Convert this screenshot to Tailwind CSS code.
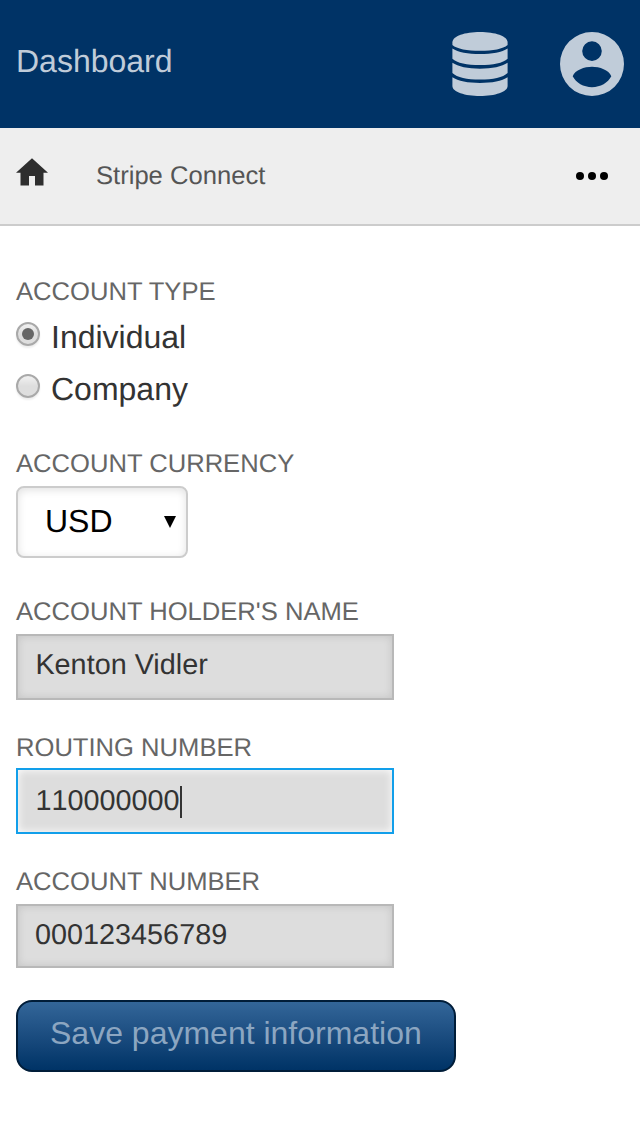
<!DOCTYPE html>
<html lang="en">
<head>
<meta charset="utf-8">
<title>Stripe Connect</title>
<script src="https://cdn.jsdelivr.net/npm/@tailwindcss/browser@4"></script>
</head>
<body class="w-[640px] h-[1136px] overflow-hidden bg-white font-['Liberation_Sans',Arial,sans-serif] text-[#333] [text-rendering:geometricPrecision]">
<header class="flex h-32 items-center bg-[#003366] px-4">
  <h1 class="mb-[6px] flex-1 text-[32px] leading-9 text-[#c0ccd9]">Dashboard</h1>
  <svg class="mr-[52px] h-16 w-14" viewBox="0 0 56 64" fill="#c0ccd9">
    <path d="M28 0C43 0 55.600 4 55.600 10.500V13C51 17 41 18.800 28 18.800S5 17 .4 13V10.500C.4 4 13 0 28 0Z"/>
    <path d="M.4 16.500C6 20.300 16 22 28 22S50 20.300 55.600 16.500V26.700C51 31 41 33 28 33S5 31 .4 26.700Z"/>
    <path d="M.4 30.800C6 34.600 16 36.700 28 36.700S50 34.600 55.600 30.800V41C51 45.500 41 47.600 28 47.600S5 45.500 .4 41Z"/>
    <path d="M.4 45.300C6 49 16 51 28 51S50 49 55.600 45.300V54C55.600 60 43 64 28 64S.4 60 .4 54Z"/>
  </svg>
  <svg class="h-16 w-16" viewBox="0 0 64 64" fill="#c0ccd9">
    <path fill-rule="evenodd" d="M32 0a32 32 0 1 1 0 64a32 32 0 0 1 0-64ZM32 9.300a9.800 9.800 0 1 0 0 19.600a9.800 9.800 0 0 0 0-19.600ZM12.700 44.300C16 50.800 23.500 55.200 32 55.200S48 50.800 51.300 44.300C49 38 39.500 34.800 32 34.800S15 38 12.700 44.300Z"/>
  </svg>
</header>
<nav class="flex h-[98px] items-center border-b-2 border-[#ccc] bg-[#eee] px-4">
  <svg class="mb-2 h-7 w-8" viewBox="0 0 32 28" fill="#2e2e2e"><path d="M16 .3 32 14.800H27.500V27.500H19V18H13V27.500H4.500V14.800H0Z"/></svg>
  <span class="ml-12 flex-1 text-[25.6px] leading-[30px] text-[#555]">Stripe Connect</span>
  <svg class="mr-4 h-2 w-8" viewBox="0 0 32 8" fill="#000"><circle cx="4" cy="4" r="4"/><circle cx="16" cy="4" r="4"/><circle cx="28" cy="4" r="4"/></svg>
</nav>
<main class="flex flex-col items-start px-4 pt-[51px]">
  <h2 class="h-[30px] text-[25.6px] leading-[30px] text-[#666]">ACCOUNT TYPE</h2>
  <label class="mt-3 flex h-9 text-[32px] leading-9">
    <span class="mt-[3px] mr-[11px] size-6 rounded-full border-2 border-[#a9a9a9] bg-linear-to-b from-[#eee] from-10% to-[#dedede] to-50% pt-1 pl-1 shadow-[0_2px_2px_rgba(0,0,0,0.07)]"><span class="block size-3 rounded-full bg-[#666]"></span></span>Individual
  </label>
  <label class="mt-4 flex h-9 text-[32px] leading-9">
    <span class="mt-[3px] mr-[11px] size-6 rounded-full border-2 border-[#a9a9a9] bg-linear-to-b from-[#eee] from-10% to-[#dedede] to-50% shadow-[0_2px_2px_rgba(0,0,0,0.07)]"></span>Company
  </label>
  <h2 class="mt-[42px] h-[30px] text-[25.6px] leading-[30px] text-[#666]">ACCOUNT CURRENCY</h2>
  <div class="mt-[7px] flex h-[72px] w-[172px] items-start rounded-lg border-2 border-[#ccc] pt-[15px] pr-[10px] pl-[27px] text-[32px] leading-9 text-black shadow-[inset_0_2px_8px_rgba(0,0,0,0.12)]">
    <span class="flex-1">USD</span>
    <svg class="mt-[13px] h-3 w-3" viewBox="0 0 12 12"><path d="M0 0H12L6 12Z"/></svg>
  </div>
  <h2 class="mt-[39px] h-[30px] text-[25.6px] leading-[30px] text-[#666]">ACCOUNT HOLDER'S NAME</h2>
  <div class="mt-[7px] h-[66px] w-[378px] border-2 border-[#b8b8b8] bg-[#ddd] pt-[13px] pl-[17.4px] text-[28.8px] leading-8 shadow-[inset_0_0_8px_rgba(0,0,0,0.12)]">Kenton Vidler</div>
  <h2 class="mt-[33px] h-[30px] text-[25.6px] leading-[30px] text-[#666]">ROUTING NUMBER</h2>
  <div class="mt-[5px] flex h-[66px] w-[378px] border-2 border-[#129fea] bg-[#ddd] pt-[15px] pl-[17.4px] text-[28.8px] leading-8 shadow-[inset_0_0_8px_#fff]"><span class="[font-kerning:none]">110000000</span><span class="mt-px ml-[0.5px] h-8 w-[2px] bg-[#333]"></span></div>
  <h2 class="mt-[33px] h-[30px] text-[25.6px] leading-[30px] text-[#666]">ACCOUNT NUMBER</h2>
  <div class="mt-[7px] h-16 w-[378px] border-2 border-[#b8b8b8] bg-[#ddd] pt-[13px] pl-[17px] text-[28.8px] leading-8 shadow-[inset_0_0_8px_rgba(0,0,0,0.12)]">000123456789</div>
  <button class="mt-8 flex h-[72px] w-[440px] items-start rounded-2xl border-2 border-[#001d39] bg-linear-to-b from-[#336699] to-[#003366] pt-[13px] pl-8 text-[32px] leading-9 text-[#8ca6c1]">Save payment information</button>
</main>
</body>
</html>
